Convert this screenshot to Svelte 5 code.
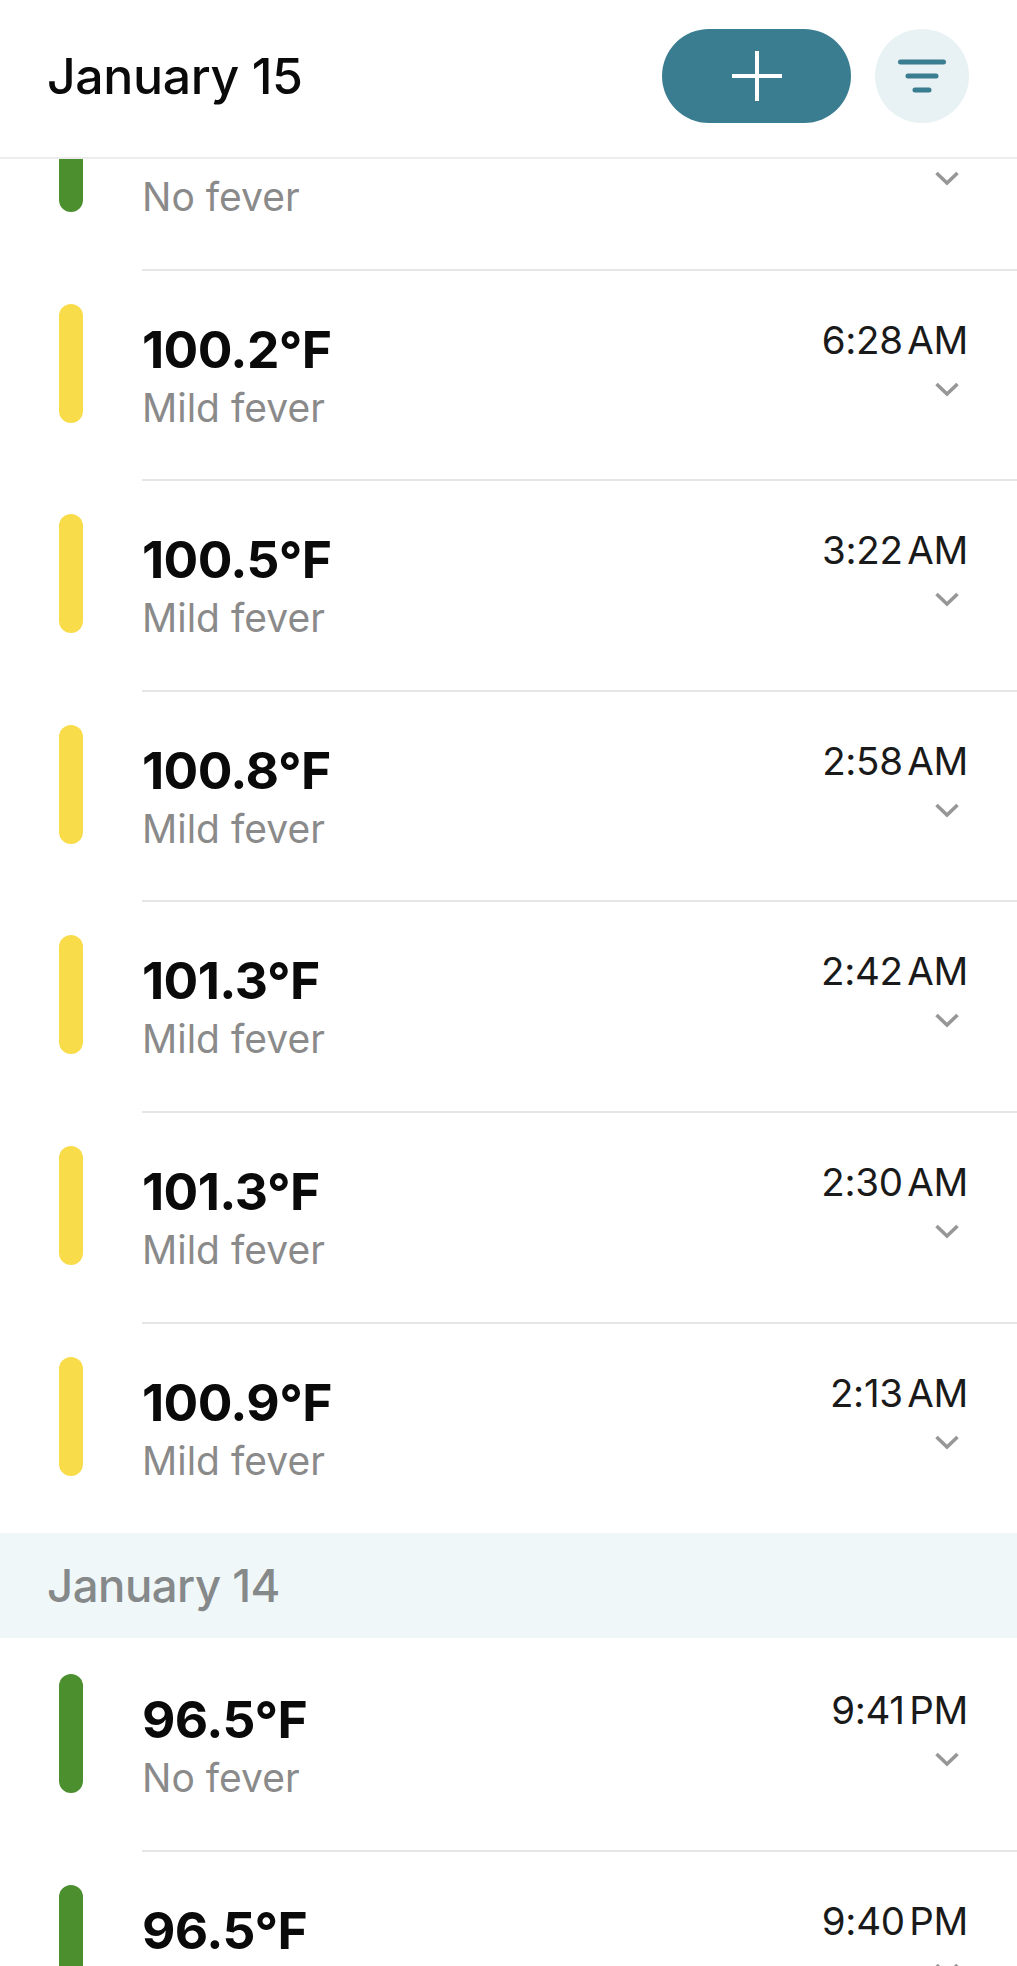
<script lang="ts">
  type Reading = { temp: string; label: string; time: string };

  const jan15: Reading[] = [
    { temp: '97.7°F', label: 'No fever', time: '' },
    { temp: '100.2°F', label: 'Mild fever', time: '6:28 AM' },
    { temp: '100.5°F', label: 'Mild fever', time: '3:22 AM' },
    { temp: '100.8°F', label: 'Mild fever', time: '2:58 AM' },
    { temp: '101.3°F', label: 'Mild fever', time: '2:42 AM' },
    { temp: '101.3°F', label: 'Mild fever', time: '2:30 AM' },
    { temp: '100.9°F', label: 'Mild fever', time: '2:13 AM' }
  ];
  const jan14: Reading[] = [
    { temp: '96.5°F', label: 'No fever', time: '9:41 PM' },
    { temp: '96.5°F', label: 'No fever', time: '9:40 PM' }
  ];
</script>

{#snippet row(r: Reading, last: boolean)}
  <div class="row">
    <span class="bar" class:mild={r.label === 'Mild fever'}></span>
    <div class="body" class:last>
      <div class="reading">
        <div class="temp">{r.temp}</div>
        <div class="label">{r.label}</div>
      </div>
      <div class="side">
        <div class="time">{r.time}</div>
        <svg class="chev" width="26" height="16" viewBox="0 0 26 16" fill="none" aria-hidden="true">
          <path d="M2.5 3 L13 13 L23.5 3" stroke="#979797" stroke-width="3.6" />
        </svg>
      </div>
    </div>
  </div>
{/snippet}

<div class="page">
  <header class="top">
    <h1>January 15</h1>
    <button class="add" aria-label="Add reading">
      <svg width="50" height="50" viewBox="0 0 50 50" aria-hidden="true">
        <path d="M25 0 V50 M0 25 H50" stroke="#fff" stroke-width="4" />
      </svg>
    </button>
    <button class="filter" aria-label="Filter">
      <svg width="48" height="34" viewBox="0 0 48 34" aria-hidden="true">
        <path d="M2.5 3 H45.5 M10 17 H38 M17 31 H31" stroke="#3a7d90" stroke-width="5" stroke-linecap="round" />
      </svg>
    </button>
  </header>

  <div class="scroll">
    <section class="today">
      {#each jan15 as r, i}
        {@render row(r, i === jan15.length - 1)}
      {/each}
    </section>
    <h2>January 14</h2>
    <section class="prev">
      {#each jan14 as r}
        {@render row(r, false)}
      {/each}
    </section>
  </div>
</div>

<style>
  :global(body) {
    background: #fff;
  }
  .page {
    height: 1966px;
    overflow: hidden;
    background: #fff;
    color: #0a0a0a;
    font-family: Inter, 'Liberation Sans', sans-serif;
    display: flex;
    flex-direction: column;
  }
  .top {
    position: relative;
    z-index: 1;
    flex: 0 0 auto;
    box-sizing: border-box;
    height: 159px;
    display: flex;
    align-items: center;
    padding: 0 48px 6px;
    gap: 24px;
    background: #fff;
    border-bottom: 2px solid #ececec;
  }
  h1 {
    flex: 1;
    margin: 0;
    font-size: 50px;
    font-weight: 500;
    letter-spacing: -0.4px;
    margin-left: -1px;
  }
  button {
    border: none;
    padding: 0;
    display: grid;
    place-items: center;
    height: 94px;
  }
  .add {
    width: 189px;
    border-radius: 47px;
    background: #3a7d90;
  }
  .filter {
    width: 94px;
    border-radius: 50%;
    background: #e8f1f3;
  }
  .scroll {
    flex: 1;
    min-height: 0;
    overflow: hidden;
  }
  .today {
    margin-top: -99px;
    margin-bottom: -1px;
  }
  .prev {
    padding-top: 3px;
  }
  .row {
    box-sizing: border-box;
    height: 210.6px;
    display: flex;
    padding-left: 59px;
  }
  .bar {
    flex: 0 0 24px;
    height: 119px;
    margin-top: 33px;
    margin-right: 59px;
    border-radius: 12px;
    background: #4c8f2f;
  }
  .bar.mild {
    background: #f9dc4a;
  }
  .body {
    flex: 1;
    display: flex;
    justify-content: space-between;
    padding: 50px 49px 0 0;
    border-bottom: 2px solid #e6e6e6;
  }
  .body.last {
    border-bottom: none;
  }
  .temp {
    font-size: 51.5px;
    font-weight: 650;
    line-height: 56px;
    letter-spacing: -0.6px;
  }
  .label {
    font-size: 39px;
    line-height: 46px;
    margin-top: 8px;
    color: #8a8a8a;
  }
  .side {
    margin-top: -5px;
    display: flex;
    flex-direction: column;
    align-items: flex-end;
  }
  .time {
    height: 48px;
    font-size: 38.5px;
    line-height: 48px;
    word-spacing: -6px;
    letter-spacing: -0.3px;
    white-space: nowrap;
    color: #1a1a1a;
  }
  .chev {
    display: block;
    margin: 17px 8px 0 0;
  }
  h2 {
    margin: 0;
    height: 105px;
    display: flex;
    align-items: center;
    padding-left: 47px;
    background: #f0f7f9;
    color: #85898a;
    font-size: 45.5px;
    font-weight: 500;
    letter-spacing: -0.5px;
  }
</style>
